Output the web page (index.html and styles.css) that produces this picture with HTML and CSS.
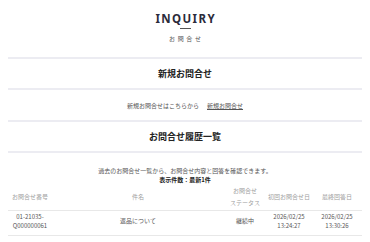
FILE: index.html
```html
<!DOCTYPE html>
<html lang="ja">
<head>
<meta charset="utf-8">
<title>INQUIRY</title>
<link rel="stylesheet" href="styles.css">
</head>
<body>
<div class="page">
  <header class="hero">
    <h1 class="hero-title">INQUIRY</h1>
    <span class="hero-bar"></span>
    <p class="hero-sub">お問合せ</p>
  </header>

  <section class="block">
    <h2 class="block-title">新規お問合せ</h2>
    <div class="block-body">
      <p class="new-text">新規お問合せはこちらから<a class="new-link" href="#">新規お問合せ</a></p>
    </div>
  </section>

  <section class="block">
    <h2 class="block-title">お問合せ履歴一覧</h2>
    <div class="history">
      <p class="history-desc">過去のお問合せ一覧から、お問合せ内容と回答を確認できます。</p>
      <p class="history-count">表示件数：最新1件</p>
      <table class="history-table">
        <colgroup>
          <col class="c-no"><col class="c-subject"><col class="c-status"><col class="c-first"><col class="c-last">
        </colgroup>
        <thead>
          <tr>
            <th>お問合せ番号</th>
            <th>件名</th>
            <th>お問合せ<br>ステータス</th>
            <th>初回お問合せ日</th>
            <th>最終回答日</th>
          </tr>
        </thead>
        <tbody>
          <tr>
            <td>01-21035-Q000000061</td>
            <td>返品について</td>
            <td>継続中</td>
            <td>2026/02/25 13:24:27</td>
            <td>2026/02/25 13:30:26</td>
          </tr>
        </tbody>
      </table>
    </div>
  </section>
</div>
</body>
</html>
```

FILE: styles.css
```css
* { box-sizing: border-box; }

html, body {
  margin: 0;
  padding: 0;
  background: #ffffff;
}

body {
  font-family: "Noto Sans CJK JP", "Noto Sans", sans-serif;
  color: #444;
  font-size: 6px;
}

.page {
  padding: 0 8px;
}

.hero {
  padding-top: 10px;
  height: 56.5px;
  display: flex;
  flex-direction: column;
  align-items: center;
}

.hero-title {
  margin: 0;
  font-family: "Noto Sans", sans-serif;
  font-weight: 700;
  font-size: 11.5px;
  line-height: 17px;
  letter-spacing: 1.4px;
  padding-left: 1.4px;
  color: #2b2b3a;
}

.hero-bar {
  display: block;
  width: 11px;
  height: 1px;
  margin-top: 1px;
  background: #555;
}

.hero-sub {
  margin: 5px 0 0;
  font-size: 6px;
  line-height: 10px;
  letter-spacing: 2.6px;
  padding-left: 2.6px;
  color: #555;
}

.block-title {
  margin: 0;
  height: 33.5px;
  border-top: 2px solid #ececf2;
  border-bottom: 2px solid #ececf2;
  display: flex;
  align-items: center;
  justify-content: center;
  font-size: 9px;
  font-weight: 700;
  color: #222;
}

.block-body {
  height: 29.5px;
  display: flex;
  align-items: center;
  justify-content: center;
  padding-top: 2px;
}

.new-text {
  margin: 0;
  font-size: 6px;
  color: #555;
}

.new-link {
  margin-left: 8px;
  color: #555;
  text-decoration: underline;
}

.history {
  padding-top: 13px;
  text-align: center;
}

.history-desc {
  margin: 0;
  font-size: 6px;
  line-height: 9px;
  color: #555;
}

.history-count {
  margin: 0;
  font-size: 6px;
  line-height: 9px;
  font-weight: 700;
  color: #222;
}

.history-table {
  width: 100%;
  table-layout: fixed;
  border-collapse: collapse;
  font-size: 6px;
}

.c-no { width: 44px; }
.c-subject { width: 172px; }
.c-status { width: 42px; }
.c-first { width: 46px; }
.c-last { width: 50px; }

.history-table th {
  height: 26px;
  padding: 0;
  font-weight: 400;
  line-height: 12px;
  color: #a0a0a0;
  text-align: center;
  vertical-align: middle;
  border-bottom: 1px solid #e8e8e8;
}

.history-table td {
  padding: 1px 2px 4px;
  line-height: 9.5px;
  color: #555;
  text-align: center;
  vertical-align: middle;
  border-bottom: 1px solid #e8e8e8;
}
```
